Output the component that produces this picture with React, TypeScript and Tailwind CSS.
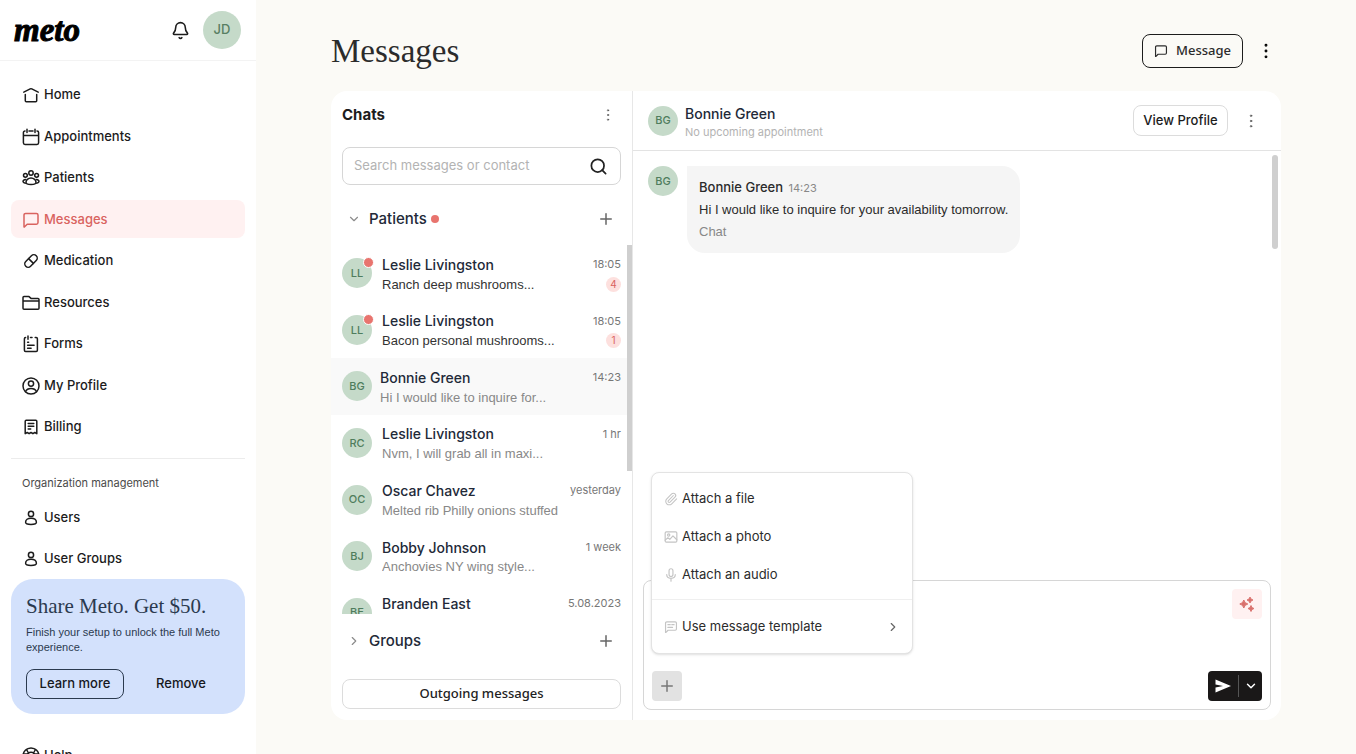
import type { ReactNode } from "react";
import clsx from "clsx";
import {
  Bell,
  ChevronDown,
  ChevronRight,
  EllipsisVertical,
  Paperclip,
  Plus,
  Search,
} from "lucide-react";

function Icon({ children, className }: { children: ReactNode; className?: string }) {
  return (
    <svg
      viewBox="0 0 18 18"
      fill="none"
      stroke="currentColor"
      strokeWidth="1.5"
      strokeLinecap="round"
      strokeLinejoin="round"
      aria-hidden="true"
      className={clsx("shrink-0", className ?? "size-[18px]")}
    >
      {children}
    </svg>
  );
}

const bubblePath = "M2 16V4a1.6 1.6 0 0 1 1.6-1.6h10.8A1.6 1.6 0 0 1 16 4v7.6a1.6 1.6 0 0 1-1.6 1.6H5.2L2.6 15.8Q2 16.3 2 15.5Z";

const icons = {
  home: (
    <>
      <path d="M1.8 6.2 8.2 2.9q.8-.4 1.6 0L16.200 6.2" />
      <path d="M3.3 8.6v6.2q0 1 1 1h9.400q1 0 1-1V8.6" />
    </>
  ),
  calendar: (
    <>
      <path d="M3 3a1.6 1.6 0 0 0-1.6 1.6v10.2A1.6 1.6 0 0 0 3 16.400h12a1.6 1.6 0 0 0 1.6-1.6V4.6A1.6 1.6 0 0 0 15 3M7 3h4M1.4 7.6h15.2" />
      <path d="M5 1.2v3.4M13 1.2v3.4" />
    </>
  ),
  people: (
    <>
      <circle cx="9" cy="4" r="2.2" />
      <circle cx="3.4" cy="6.3" r="1.9" />
      <circle cx="14.6" cy="6.3" r="1.9" />
      <path d="M9 9c-3 0-5 2.200-5 4.200 0 1.500 1.300 2.300 5 2.300s5-.8 5-2.300C14 11.200 12 9 9 9Z" />
      <path d="M3.600 10.400c-1.500.2-2.600 1.200-2.600 2.200 0 .8.800 1.400 2.300 1.600M14.400 10.400c1.500.2 2.600 1.200 2.600 2.200 0 .8-.8 1.400-2.300 1.600" />
    </>
  ),
  bubble: <path d={bubblePath} />,
  pill: (
    <g transform="rotate(45 9 9)">
      <rect x="5.600" y="1.600" width="6.800" height="14.800" rx="3.400" />
      <path d="M5.600 9h6.800" />
    </g>
  ),
  folder: (
    <path d="M1 7h16M1 4v10.200q0 1 1 1h14q1 0 1-1V5.400q0-1-1-1H9L7 2.600H2q-1 0-1 1Z" />
  ),
  form: (
    <>
      <path d="M3.600 2.500q-1.200 0-1.200 1.200v11.600q0 1.200 1.200 1.200h10.600q1.200 0 1.200-1.200V3.700q0-1.200-1.200-1.200h-1M8.500 2.500H10" />
      <path d="M6 1v3.200M5.600 7.300h1M5.600 10.300h6.500M5.600 13.300h3.500" />
    </>
  ),
  profile: (
    <>
      <circle cx="9" cy="9" r="8" />
      <circle cx="9" cy="6.600" r="2.600" />
      <path d="M3.500 14.600C4.500 12.500 6.500 11.600 9 11.600s4.500.9 5.500 3" />
    </>
  ),
  receipt: (
    <>
      <path d="M3.200 15.700V3.300q0-1 1-1h9.600q1 0 1 1v12.400l-2-1.200-1.900 1.200L9 14.500l-1.900 1.200-1.900-1.200Z" />
      <path d="M6.200 5.500h5.600M6.200 8.200h5.600M6.200 10.900h2.500" />
    </>
  ),
  user: (
    <>
      <circle cx="9" cy="4.900" r="2.600" />
      <path d="M9 9.200c-3.300 0-5.400 1.600-5.400 4 0 1.600 1.200 2.200 5.400 2.200s5.400-.6 5.400-2.200c0-2.400-2.100-4-5.400-4Z" />
    </>
  ),
  help: (
    <>
      <circle cx="9" cy="9" r="8" />
      <circle cx="9" cy="9" r="3.800" />
      <path d="m4.500 2.500 2 3.500M13.500 2.500l-2 3.500M1.600 7h3.800M16.400 7h-3.800M4.500 15.500l2-3.500M13.500 15.500l-2-3.500" />
    </>
  ),
  photo: (
    <>
      <rect x="1.500" y="2.500" width="15" height="13" rx="1.500" />
      <circle cx="6" cy="6.500" r="1.500" />
      <path d="m1.500 13 3.500-3 2.500 2 4-4.500 5 5" />
    </>
  ),
  mic: (
    <>
      <rect x="6.500" y="1" width="5" height="10" rx="2.500" />
      <path d="M3.500 8.500c0 6.500 11 6.500 11 0M9 13.500V17" />
    </>
  ),
  template: (
    <>
      <path d={bubblePath} />
      <path d="M5 6h3M10 6h3M5 9.500h6" />
    </>
  ),
};

type IconName = keyof typeof icons;

const mainNav: { label: string; icon: IconName }[] = [
  { label: "Home", icon: "home" },
  { label: "Appointments", icon: "calendar" },
  { label: "Patients", icon: "people" },
  { label: "Messages", icon: "bubble" },
  { label: "Medication", icon: "pill" },
  { label: "Resources", icon: "folder" },
  { label: "Forms", icon: "form" },
  { label: "My Profile", icon: "profile" },
  { label: "Billing", icon: "receipt" },
];

const chats = [
  { initials: "LL", name: "Leslie Livingston", text: "Ranch deep mushrooms...", time: "18:05", unread: 4 },
  { initials: "LL", name: "Leslie Livingston", text: "Bacon personal mushrooms...", time: "18:05", unread: 1 },
  { initials: "BG", name: "Bonnie Green", text: "Hi I would like to inquire for...", time: "14:23", active: true },
  { initials: "RC", name: "Leslie Livingston", text: "Nvm, I will grab all in maxi...", time: "1 hr" },
  { initials: "OC", name: "Oscar Chavez", text: "Melted rib Philly onions stuffed", time: "yesterday" },
  { initials: "BJ", name: "Bobby Johnson", text: "Anchovies NY wing style...", time: "1 week" },
  { initials: "BE", name: "Branden East", text: "", time: "5.08.2023" },
];

function NavItem({ label, icon, active }: { label: string; icon: IconName; active?: boolean }) {
  return (
    <a
      href="#"
      className={clsx(
        "flex h-[38px] shrink-0 items-center gap-1 rounded-lg pt-0.5 pl-[11px] text-[13px] font-medium",
        active ? "bg-[#fff1f1] text-[#d9635f]" : "text-[#1c1c1c]",
      )}
    >
      <Icon>{icons[icon]}</Icon>
      {label}
    </a>
  );
}

function Avatar({ initials, dot }: { initials: string; dot?: boolean }) {
  return (
    <span className="relative flex size-[30px] shrink-0 items-center justify-center rounded-full bg-[#c5dac9] text-[11px] font-medium text-[#4f7d5d]">
      {initials}
      {dot && (
        <span className="absolute -top-px -right-0.5 size-[11px] rounded-full border border-white bg-[#e8746e]" />
      )}
    </span>
  );
}

function Sidebar() {
  return (
    <aside className="flex w-64 shrink-0 flex-col overflow-hidden bg-white">
      <div className="flex h-[61px] shrink-0 items-center border-b border-[#f3f3f3] pr-[15px] pl-[14px]">
        <a
          href="#"
          className="font-['Liberation_Serif',serif] text-[33px] leading-8 font-bold text-black italic [-webkit-text-stroke:1px_black]"
        >
          meto
        </a>
        <button type="button" aria-label="Notifications" className="ml-auto text-[#1c1c1c]">
          <Bell className="size-[19px]" strokeWidth={2} />
        </button>
        <button
          type="button"
          className="ml-[13px] size-[38px] rounded-full bg-[#c5dac9] text-[13px] font-medium text-[#587f63]"
        >
          JD
        </button>
      </div>

      <div className="flex flex-col px-[11px] pt-[14px]">
        <nav className="flex h-[370px] shrink-0 flex-col justify-between">
          {mainNav.map((item) => (
            <NavItem key={item.label} {...item} active={item.label === "Messages"} />
          ))}
        </nav>
        <hr className="mt-[13px] border-[#ececec]" />
        <h2 className="mt-4 pl-[11px] text-[11px] leading-4 text-[#4a4a4a]">Organization management</h2>
        <nav className="mt-[7px] flex flex-col gap-[3px]">
          <NavItem label="Users" icon="user" />
          <NavItem label="User Groups" icon="user" />
        </nav>

        <section className="mt-0.5 rounded-[22px] bg-[#d3e1fc] p-[15px]">
          <h2 className="font-['Liberation_Serif',serif] text-[21px] leading-6 text-[#2b3a4f]">
            Share Meto. Get $50.
          </h2>
          <p className="mt-[7px] font-['Liberation_Sans',sans-serif] text-[11px] leading-[15px] text-[#2b3a4f]">
            Finish your setup to unlock the full Meto experience.
          </p>
          <div className="mt-[14px] flex text-[13px] font-medium text-[#16181d]">
            <button type="button" className="h-[30px] w-[98px] rounded-lg border border-[#2b3a4f]">
              Learn more
            </button>
            <button type="button" className="ml-2 h-[30px] flex-1">
              Remove
            </button>
          </div>
        </section>

        <nav className="mt-[22px]">
          <NavItem label="Help" icon="help" />
        </nav>
      </div>
    </aside>
  );
}

function ChatList() {
  return (
    <section className="flex w-[302px] shrink-0 flex-col border-r border-[#e7e7e7]">
      <div className="flex h-12 shrink-0 items-center justify-between pr-4 pl-[11px]">
        <h2 className="text-[15px] font-bold text-[#1c1c1c]">Chats</h2>
        <button type="button" aria-label="Chat options" className="text-[#555]">
          <EllipsisVertical className="size-4" strokeWidth={1.2} />
        </button>
      </div>

      <label className="mx-[11px] mt-2 flex h-[38px] shrink-0 items-center rounded-lg border border-[#d6d6d6] pr-3 pl-[11px]">
        <input
          type="text"
          aria-label="Search messages or contact"
          placeholder="Search messages or contact"
          className="min-w-0 flex-1 text-[13px] outline-none placeholder:text-[#b3b3b3]"
        />
        <Search className="size-[19px]" color="#222" strokeWidth={2.200} />
      </label>

      <div className="mt-2 flex h-[52px] shrink-0 items-center pr-[17px] pl-4">
        <button type="button" className="flex items-center text-[15px] font-medium text-[#222938]">
          <ChevronDown className="mr-2 size-[14px] text-[#8c8c8c]" />
          Patients
          <span className="ml-1 size-2 rounded-full bg-[#e8746e]" />
        </button>
        <button type="button" aria-label="Add patient" className="ml-auto text-[#666]">
          <Plus className="size-[18px]" strokeWidth={2} />
        </button>
      </div>

      <div className="flex min-h-0 flex-1 overflow-hidden">
        <ul className="grid h-[396px] flex-1 auto-rows-fr">
          {chats.map((chat, i) => (
            <li key={i}>
              <a
                href="#"
                className={clsx(
                  "flex h-full items-center pr-[6px] pl-[11px]",
                  chat.active ? "gap-2 bg-[#f9f9f9]" : "gap-[10px]",
                )}
              >
                <Avatar initials={chat.initials} dot={!!chat.unread} />
                <span className="min-w-0 flex-1 pt-0.5">
                  <span className="flex h-5 items-center justify-between">
                    <span className="text-[14px] font-medium text-[#222938]">{chat.name}</span>
                    <span className="text-[11px] text-[#777]">{chat.time}</span>
                  </span>
                  <span className="flex h-5 items-center justify-between">
                    <span
                      className={clsx(
                        "truncate font-['Liberation_Sans',sans-serif] text-[13px]",
                        chat.unread ? "text-[#333]" : "text-[#888]",
                      )}
                    >
                      {chat.text}
                    </span>
                    {chat.unread && (
                      <span className="flex size-[15px] items-center justify-center rounded-full bg-[#fde0de] text-[10px] text-[#d9635f]">
                        {chat.unread}
                      </span>
                    )}
                  </span>
                </span>
              </a>
            </li>
          ))}
        </ul>
        <div className="h-[226px] w-[5px] bg-[#cfcfcf]" />
      </div>

      <div className="flex h-[54px] shrink-0 items-center pr-[17px] pl-4">
        <button type="button" className="flex items-center text-[15px] font-medium text-[#222938]">
          <ChevronRight className="mr-2 size-[14px] text-[#8c8c8c]" />
          Groups
        </button>
        <button type="button" aria-label="Add group" className="ml-auto text-[#666]">
          <Plus className="size-[18px]" strokeWidth={2} />
        </button>
      </div>

      <button
        type="button"
        className="m-[11px] h-[30px] shrink-0 rounded-lg border border-[#dcdcdc] font-['Noto_Sans',sans-serif] text-[13px] font-medium text-[#222]"
      >
        Outgoing messages
      </button>
    </section>
  );
}

function MenuItem({ icon, label, children }: { icon: ReactNode; label: string; children?: ReactNode }) {
  return (
    <button type="button" className="flex h-[38px] w-full items-center px-3 text-[13px] text-[#2b2b2b]">
      <span className="mr-1 text-[#c4c4c4]">{icon}</span>
      {label}
      {children}
    </button>
  );
}

function AttachMenu() {
  return (
    <div className="absolute bottom-[55px] left-[7px] w-[262px] rounded-lg border border-[#e3e3e3] bg-white py-[7px] shadow-sm">
      <MenuItem icon={<Paperclip className="size-[14px]" strokeWidth={1.8} />} label="Attach a file" />
      <MenuItem icon={<Icon className="size-[14px]">{icons.photo}</Icon>} label="Attach a photo" />
      <MenuItem icon={<Icon className="size-[14px]">{icons.mic}</Icon>} label="Attach an audio" />
      <hr className="mt-[5px] mb-2 border-[#efefef]" />
      <MenuItem icon={<Icon className="size-[14px]">{icons.template}</Icon>} label="Use message template">
        <ChevronRight className="ml-auto size-[14px] text-[#666]" />
      </MenuItem>
    </div>
  );
}

function Composer() {
  return (
    <form className="relative mx-[10px] mb-[10px] flex h-[130px] shrink-0 flex-col justify-between rounded-lg border border-[#d6d6d6] p-2">
      <div className="flex flex-1 items-start">
        <textarea aria-label="Write a message" className="h-full flex-1 resize-none text-[13px] outline-none" />
        <button
          type="button"
          aria-label="Suggest a reply"
          className="flex size-[30px] items-center justify-center rounded bg-[#fff1f1] text-[#d9706c]"
        >
          <svg viewBox="0 0 16 16" fill="currentColor" className="size-4" aria-hidden="true">
            <path d="M4.800 4q.7 3.300 4 4-3.300.7-4 4-.7-3.300-4-4 3.300-.7 4-4Z" stroke="currentColor" />
            <path
              d="M11 1q.5 2.500 3 3-2.500.5-3 3-.5-2.500-3-3 2.500-.5 3-3ZM12 9.500q.5 2.500 3 3-2.500.5-3 3-.5-2.500-3-3 2.500-.5 3-3Z"
              stroke="currentColor"
              strokeWidth=".9"
            />
          </svg>
        </button>
      </div>
      <div className="flex items-center justify-between">
        <button
          type="button"
          aria-label="Add attachment"
          className="flex size-[30px] items-center justify-center rounded bg-[#e2e2e2] text-[#777]"
        >
          <Plus className="size-[18px]" strokeWidth={2} />
        </button>
        <div className="flex h-[30px] items-center rounded bg-[#1a1818] text-white">
          <button type="submit" aria-label="Send" className="flex w-[30px] justify-center">
            <svg viewBox="0 0 16 16" fill="currentColor" className="size-4" aria-hidden="true">
              <path d="M.5 1.500 16 8 .5 14.500V9.500L8 8 .5 6.500Z" />
            </svg>
          </button>
          <span className="h-[22px] w-px bg-[#555]" />
          <button type="button" aria-label="Send options" className="flex w-[23px] justify-center">
            <ChevronDown className="size-[14px]" strokeWidth={2.5} />
          </button>
        </div>
      </div>
      <AttachMenu />
    </form>
  );
}

function Conversation() {
  return (
    <section className="flex min-w-0 flex-1 flex-col">
      <header className="flex h-[60px] shrink-0 items-center border-b border-[#e3e3e3] pr-[21px] pl-[15px]">
        <Avatar initials="BG" />
        <div className="ml-[7px] pt-0.5">
          <h2 className="text-[14px] leading-5 font-medium text-[#222938]">Bonnie Green</h2>
          <p className="text-[11px] leading-4 text-[#b3b3b3]">No upcoming appointment</p>
        </div>
        <button
          type="button"
          className="ml-auto h-[31px] w-[95px] rounded-lg border border-[#dcdcdc] text-[13px] font-medium text-[#1c1c1c]"
        >
          View Profile
        </button>
        <button type="button" aria-label="Conversation options" className="ml-[14px] text-[#555]">
          <EllipsisVertical className="size-[18px]" strokeWidth={1.2} />
        </button>
      </header>

      <div className="flex min-h-0 flex-1 justify-between pt-1 pr-[3px] pl-[15px]">
        <article className="flex items-start gap-[9px] pt-[11px]">
          <Avatar initials="BG" />
          <div className="rounded-[18px] rounded-tl-none bg-[#f5f5f5] px-3 py-[10px] font-['Liberation_Sans',sans-serif] text-[13px] leading-[22px] text-[#2b2b2b]">
            <h3 className="font-['Inter',sans-serif] font-medium">
              Bonnie Green <time className="ml-0.5 text-[11px] font-normal text-[#888]">14:23</time>
            </h3>
            <p>Hi I would like to inquire for your availability tomorrow.</p>
            <p className="text-[#888]">Chat</p>
          </div>
        </article>
        <div className="h-[94px] w-[6px] rounded-full bg-[#cfcfcf]" />
      </div>

      <Composer />
    </section>
  );
}

export default function App() {
  return (
    <div className="flex h-screen overflow-hidden bg-[#fbfaf6] font-['Inter',sans-serif]">
      <Sidebar />
      <main className="flex min-w-0 flex-1 flex-col px-[75px] py-[34px]">
        <header className="flex h-[34px] shrink-0 items-center pr-[5px]">
          <h1 className="font-['Liberation_Serif',serif] text-[33px] leading-[34px] text-[#2b2b2b]">Messages</h1>
          <button
            type="button"
            className="ml-auto flex h-[34px] items-center gap-2 rounded-lg border border-[#1c1c1c] px-[11px] font-['Noto_Sans',sans-serif] text-[13px] font-medium text-[#2b2b2b]"
          >
            <Icon className="size-[14px]">{icons.bubble}</Icon>
            Message
          </button>
          <button type="button" aria-label="More options" className="ml-[13px] text-black">
            <EllipsisVertical className="size-5" strokeWidth={1.5} />
          </button>
        </header>
        <div className="mt-[23px] flex min-h-0 flex-1 overflow-hidden rounded-2xl bg-white">
          <ChatList />
          <Conversation />
        </div>
      </main>
    </div>
  );
}
